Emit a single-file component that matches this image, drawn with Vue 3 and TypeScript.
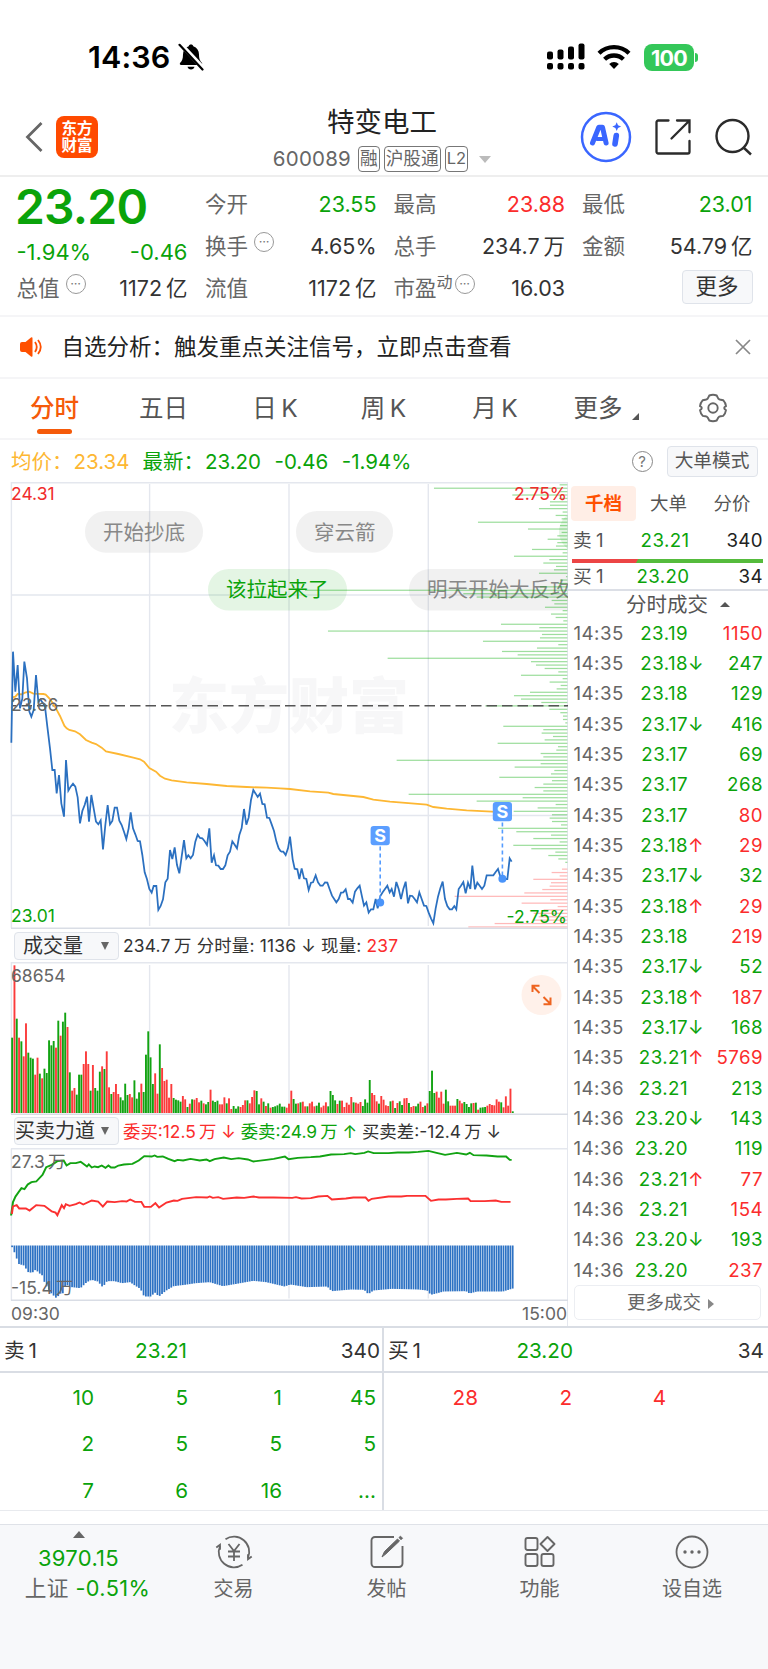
<script setup lang="ts">
type Tone = 'up' | 'down' | 'plain'
interface Quote { label: string; value: string; tone: Tone; info?: boolean; sup?: string }
interface Trade { time: string; price: string; dir: '' | 'u' | 'd'; vol: string; tone: Tone }
interface Bar { x: number; y: number; h: number; tone: Tone }

const quotes: Quote[] = [
  { label: '今开', value: '23.55', tone: 'down' },
  { label: '最高', value: '23.88', tone: 'up' },
  { label: '最低', value: '23.01', tone: 'down' },
  { label: '换手', value: '4.65%', tone: 'plain', info: true },
  { label: '总手', value: '234.7\u2009万', tone: 'plain' },
  { label: '金额', value: '54.79\u2009亿', tone: 'plain' },
  { label: '流值', value: '1172\u2009亿', tone: 'plain' },
  { label: '市盈', value: '16.03', tone: 'plain', info: true, sup: '动' },
]

const tabs = ['分时', '五日', '日\u2009K', '周\u2009K', '月\u2009K', '更多']

const trades: Trade[] = `14:35 23.19 - 1150 r|14:35 23.18 d 247 g|14:35 23.18 - 129 g|14:35 23.17 d 416 g|14:35 23.17 - 69 g|14:35 23.17 - 268 g|14:35 23.17 - 80 r|14:35 23.18 u 29 r|14:35 23.17 d 32 g|14:35 23.18 u 29 r|14:35 23.18 - 219 r|14:35 23.17 d 52 g|14:35 23.18 u 187 r|14:35 23.17 d 168 g|14:35 23.21 u 5769 r|14:36 23.21 - 213 g|14:36 23.20 d 143 g|14:36 23.20 - 119 g|14:36 23.21 u 77 r|14:36 23.21 - 154 r|14:36 23.20 d 193 g|14:36 23.20 - 237 r`
  .split('|')
  .map((row) => {
    const [time, price, dir, vol, tone] = row.split(' ')
    return { time, price, dir: dir === '-' ? '' : (dir as 'u' | 'd'), vol, tone: tone === 'r' ? 'up' : 'down' }
  })

const sellQueue = ['10', '5', '1', '45', '2', '5', '5', '5', '7', '6', '16', '...']
const buyQueue = ['28', '2', '4']

const gridX = [149.6, 289, 428.3]

const priceAm = '34,308 39,35 46,155 53,75 60,205 67,175 73,65 81,115 88,215 94,230 101,210 108,105 115,185 121,178 128,188 135,200 142,260 150,325 157,390 164,390 170,460 177,405 184,490 192,530 198,360 205,452 212,440 219,431 226,440 233,472 240,550 247,513 254,495 261,470 267,545 274,465 281,505 288,545 295,553 302,541 309,628 316,555 323,495 330,553 337,543 344,503 351,503 358,542 365,555 372,575 379,597 386,565 392,517 399,565 406,583 413,603 420,604 427,645 434,697 441,718 448,747 455,758 461,738 469,738 475,810 482,798 489,778 496,727 503,716 510,630 517,657 524,622 531,675 538,700 545,650 552,600 559,655 565,646 572,655 579,645 586,605 593,584 600,594 607,595 614,604 621,615 628,565 635,668 642,646 648,676 655,677 662,687 669,687 676,676 683,646 690,635 697,604 704,614 711,625 718,585 725,564 732,507 739,554 746,533 753,480 760,450 767,461 773,471 780,461 787,492 794,493 801,533 808,534 815,553 822,573 829,604 836,625 843,635'
const pricePm = '3,455 10,455 17,465 24,445 30,410 38,478 44,506 52,508 58,537 65,505 72,535 79,537 86,570 93,548 99,547 107,526 114,547 121,557 128,557 135,547 142,548 149,568 156,587 163,598 169,607 176,597 183,578 190,577 197,568 204,597 210,597 218,608 225,575 232,565 239,557 246,590 252,617 259,607 266,638 273,628 280,628 287,597 293,625 301,588 308,577 315,567 322,557 329,577 335,567 342,590 349,546 356,567 363,597 370,567 377,545 384,610 390,587 397,588 404,597 411,607 418,577 425,597 432,617 439,618 446,638 453,655 460,670 467,625 474,590 481,565 488,545 495,597 502,618 509,628 516,628 523,618 529,628 536,567 543,557 550,546 557,580 564,548 571,567 577,497 585,568 592,548 599,557 606,567 613,557 620,526 640,526 647,516 654,507 661,530 667,537 682,537 689,475 695,485'
const avgAm = '35,205 38,172 46,170 53,162 65,163 75,158 88,155 100,161 130,162 137,164 150,177 165,200 180,228 193,257 200,265 208,270 225,274 240,283 258,300 275,308 288,312 305,323 318,334 355,342 400,353 420,358 432,365 448,384 468,395 480,407 495,416 515,421 560,427 620,432 680,438 740,441 800,443 840,445'
const avgPm = '0,265 30,267 90,274 145,278 160,282 250,291 280,299 330,305 440,314 460,321 500,326 560,331 636,335 665,337'

// Resting orders per price level, top to bottom; the last 18 are bids.
const depth = '23 400 25 165 25 52 52 85 14 35 17 268 22 118 17 30 59 30 34 106 14 160 54 72 34 40 85 4 22 27 82 787 312 272 47 39 67 14 49 35 12 199 84 718 76 82 253 27 91 196 149 539 109 94 68 27 139 14 53 20 32 112 160 139 78 246 54 21 13 13 6 192 72 77 43 68 209 28 33 80 72 512 80 158 39 49 204 46 72 98 72 476 134 272 35 89 161 46 53 46 19 208 153 49 102 23 162 108 36 57 27 6 0 16 47 23 102 49 53 75 129 338 51 137 29 71 101 86 101 218 297'
  .split(' ')
  .map(Number)
const asks = depth.length - 18
const depthBars = depth.map((n, i) => ({ w: n / 3, x: 567.3 - n / 3, y: 484.2 + i * 3.401, ask: i < asks }))

const STEP = 2.307
const volumeBars: Bar[] = 'g352 r135 g295 r352 g363 r408 r309 g397 g412 g415 r463 r412 g460 r474 g445 g458 g360 g375 g362 r382 g301 r346 g304 g277 r320 g456 r511 r503 g523 g463 g463 r431 r393 r431 g511 r434 g503 g511 g454 r438 g446 r393 r501 g521 r515 r491 r521 g531 g540 g490 g524 r521 r531 g480 g535 g516 r490 g515 g403 g333 g411 g491 r459 r520 g372 r443 r482 r478 r532 r491 g533 g538 g540 g544 r527 r537 g560 r550 g537 r538 r533 r546 g541 r549 g552 g545 r508 g541 g545 g541 r552 r552 r531 g549 r534 r566 g557 g565 g558 r560 r554 r540 g540 r549 r530 r510 g512 g552 r534 g544 r557 g549 r562 g560 g558 g555 g550 g559 g559 r562 r550 r511 g536 g550 r549 g546 r544 r558 g558 r549 r544 r558 g556 g547 r561 r556 r546 g558 g512 g524 g540 r551 g541 r541 r560 r547 r553 r530 g546 r547 r550 r545 g557 g537 g547 g479 r518 r524 r543 g550 r527 r538 r555 r557 g543 r541 g563 r548 g543 g554 r534 r533 g548 r560 r557 g558 g550 r544 r560 g556 r549 g512 g451 g518 r514 r532 r514 r550 g508 g543 r556 r556 r556 g536 r541 r549 g545 g551 g560 g549 r548 g547 r568 g562 g561 g560 r556 r551 r554 r555 r537 r544 g546 r561 r528 r556 r505 g573'
  .split(' ')
  .map((t, i) => {
    const h = (578 - Number(t.slice(1))) / 3
    return { x: 11.2 + i * STEP, y: 1113 - h, h, tone: t[0] === 'r' ? 'up' : 'down' }
  })

const sellForce = '30,315 35,275 42,258 50,245 58,233 66,236 75,222 85,215 98,213 115,193 125,170 140,163 155,152 172,150 180,165 190,158 205,158 218,154 235,168 240,162 248,171 256,168 265,170 275,165 285,172 293,165 300,171 310,171 320,165 335,162 358,160 375,150 390,137 410,138 418,135 425,139 440,138 455,145 472,152 480,148 495,150 515,145 540,150 558,147 567,152 580,146 605,141 625,146 645,143 670,147 685,153 720,148 740,145 770,138 780,146 805,142 840,140 865,138 895,132 930,131 948,128 960,131 985,127 995,123 1010,128 1050,128 1075,126 1105,126 1130,124 1158,121 1180,127 1203,133 1235,127 1260,132 1270,127 1280,134 1315,135 1345,138 1368,138 1378,148 1383,148'
const buyForce = '32,310 35,288 45,284 52,294 70,294 80,300 98,284 120,286 140,303 150,306 155,314 167,284 173,293 178,281 188,286 205,281 215,276 225,282 248,270 265,273 278,288 290,273 310,275 330,272 342,273 352,267 365,274 382,274 390,289 408,289 420,278 430,291 450,276 470,270 480,271 492,265 530,260 560,261 567,258 575,262 590,260 603,265 640,261 660,262 685,258 700,261 740,261 790,262 800,260 815,264 840,263 860,258 885,256 897,267 935,264 955,261 988,261 996,271 1005,265 1050,258 1085,258 1100,256 1150,256 1165,271 1185,267 1205,267 1235,265 1265,264 1272,272 1310,272 1340,270 1355,274 1380,274'
const gap = '33,410 42,432 50,460 65,465 78,487 90,485 97,477 105,487 115,495 122,520 140,550 155,565 160,550 172,548 178,522 195,530 218,533 235,515 248,508 265,513 278,530 290,512 310,512 330,518 352,515 365,525 380,535 390,558 410,558 418,545 430,558 450,540 470,527 500,523 530,518 567,515 603,527 640,520 685,511 720,515 770,528 785,522 830,530 885,528 897,542 950,537 985,538 996,551 1010,540 1060,535 1130,537 1155,540 1165,553 1200,543 1260,542 1270,549 1290,543 1360,543 1390,533'
  .split(' ')
  .map((p) => p.split(',').map(Number))

function gapAt(x: number): number {
  const k = Math.max(1, gap.findIndex((p) => p[0] >= x))
  const [x0, y0] = gap[k - 1]
  const [x1, y1] = gap[k]
  return y0 + ((y1 - y0) * (x - x0)) / (x1 - x0)
}
const gapBars = Array.from({ length: 218 }, (_, i) => ({
  x: 11.2 + i * STEP,
  h: (gapAt(33 + i * 6.237) - 405) / 3,
}))
</script>

<template>
  <div class="page">
    <header class="status">
      <div class="clock">
        <span class="time">14:36</span>
        <svg width="26" height="28" viewBox="0 0 26 28">
          <path d="M13 1.500c1.300 0 2 .7 2.300 1.700C19 4.500 21 7.500 21 11.500c0 4.500 1.300 6.500 2.800 8.300.8.900.4 2.200-1 2.200H3.200c-1.400 0-1.800-1.300-1-2.200 1.700-1.800 2.800-3.800 2.800-8.300 0-4 2-7 5.700-8.300.3-1 1-1.700 2.300-1.700z" />
          <path d="M9.500 23.800h7c-.4 1.800-1.800 2.700-3.500 2.700s-3.100-.9-3.500-2.700z" />
          <path d="M3 1.500 25.500 25.500" stroke="#fff" stroke-width="4.500" />
          <path d="M1.500 1.800 24.500 26.500" stroke="#000" stroke-width="2.200" stroke-linecap="round" />
        </svg>
      </div>
      <div class="sys">
        <svg width="39" height="28" viewBox="0 0 39 28">
          <g>
            <rect x="1" y="8.500" width="6" height="8" rx="2" /><rect x="11.500" y="6.500" width="6" height="10" rx="2" />
            <rect x="22" y="3.500" width="6" height="13" rx="2" /><rect x="32.500" y=".5" width="6" height="16" rx="2" />
            <rect x="1" y="20" width="6" height="6.500" rx="2" /><rect x="11.500" y="20" width="6" height="6.500" rx="2" />
            <rect x="22" y="20" width="6" height="6.500" rx="2" /><rect x="32.500" y="20" width="6" height="6.500" rx="2" />
          </g>
        </svg>
        <svg class="wifi" width="34" height="26" viewBox="0 0 34 26" fill="none" stroke="#000" stroke-width="4.300">
          <path d="M2 9.300a21.500 21.500 0 0 1 30 0" /><path d="M7.600 15.300a13.500 13.500 0 0 1 18.800 0" />
          <path d="M17 25l-4.800-4.900a6.800 6.800 0 0 1 9.600 0z" fill="#000" stroke="none" />
        </svg>
        <span class="battery">100</span><i class="nub"></i>
      </div>
    </header>

    <nav class="top">
      <div class="left">
        <svg width="18" height="30" viewBox="0 0 18 30" fill="none" stroke="#666" stroke-width="2.800"><path d="M16.500 1 2.500 15l14 14" /></svg>
        <div class="logo"><span>东方</span><span>财富</span></div>
      </div>
      <div class="title">
        <h1>特变电工</h1>
        <div class="code"><span>600089</span><b>融</b><b>沪股通</b><b>L2</b><i></i></div>
      </div>
      <div class="actions">
        <svg width="52" height="52" viewBox="0 0 52 52">
          <circle cx="26" cy="26" r="24" fill="#fff" stroke="#3a66ff" stroke-width="2.500" />
          <g fill="none" stroke="#3a66ff" stroke-linecap="round" stroke-linejoin="round">
            <path d="M12.500 32 18.800 16.200h3.700l3.600 15.800" stroke-width="5" /><path d="M17 28h7" stroke-width="4" />
            <path d="M36.300 24.500 35 33" stroke-width="5.600" />
          </g>
          <path d="M36.700 11.200l1.300 3.100 3.100 1.300-3.100 1.300-1.300 3.100-1.300-3.100-3.100-1.300 3.100-1.300z" fill="#3a66ff" />
        </svg>
        <svg width="36" height="36" viewBox="0 0 36 36" fill="none" stroke="#2b2b2b" stroke-width="2.300" stroke-linecap="round">
          <path d="M13.500 1.500H3.200a1.700 1.700 0 0 0-1.700 1.700v29.600a1.700 1.700 0 0 0 1.700 1.700h29.600a1.700 1.700 0 0 0 1.700-1.700V22" /><path d="M22 1.500h12.500v11.800M34 2 16.500 19.500" />
        </svg>
        <svg width="38" height="38" viewBox="0 0 38 38" fill="none" stroke="#2b2b2b" stroke-width="2.400"><circle cx="17.500" cy="18" r="16" /><path d="M28.500 29.500 36 36.500" /></svg>
      </div>
    </nav>

    <section class="quote">
      <div class="last">
        <div class="big">23.20</div>
        <div class="pair green"><span>-1.94%</span><span>-0.46</span></div>
        <div class="pair cap"><span class="lbl">总值<i class="dots">···</i></span><span>1172&#8201;亿</span></div>
      </div>
      <div class="cells">
        <div v-for="q in quotes" :key="q.label" class="cell">
          <span class="lbl">{{ q.label }}<sup v-if="q.sup">{{ q.sup }}</sup><i v-if="q.info" class="dots" :class="{ tight: q.sup }">···</i></span>
          <span :class="q.tone">{{ q.value }}</span>
        </div>
        <div class="cell end"><button class="more">更多</button></div>
      </div>
    </section>

    <section class="notice">
      <svg width="24" height="22" viewBox="0 0 24 22">
        <path d="M1 8q0-2 2-2h3.500L12 1.500q1.500-1 1.500.8v17.400q0 1.800-1.500.8L6.500 16H3q-2 0-2-2z" fill="#ff5000" />
        <path d="M16 6q3.500 5 0 10M19 4q5.500 7 0 14" fill="none" stroke="#ff5000" stroke-width="1.800" />
      </svg>
      <p>自选分析：触发重点关注信号，立即点击查看</p>
      <svg width="16" height="16" viewBox="0 0 16 16" stroke="#888" stroke-width="1.700"><path d="M1 1l14 14M15 1 1 15" /></svg>
    </section>

    <section class="tabs">
      <div v-for="(t, i) in tabs" :key="t" class="tab" :class="{ on: i === 0 }"><span>{{ t }}</span><i v-if="i === 5" class="corner"></i></div>
      <div class="tab">
        <svg width="30" height="30" viewBox="0 0 30 30" fill="none" stroke="#666" stroke-width="1.900" stroke-linejoin="round">
          <path d="M11.300 2.500Q15 1 18.700 2.500L20.300 5.600Q21.200 6.800 22.800 6.700L25.200 7.200Q27.700 10 28 13.200L26.600 14Q26 15 26.600 16L28 17.200Q27.500 20.500 25.200 22.900L22.800 23.300Q21.200 23.200 20.300 24.500L18.700 27.500Q15 29 11.300 27.500L9.700 24.500Q8.800 23.200 7.200 23.300L4.800 22.900Q2.500 20.500 2 17.200L3.400 16Q4 15 3.400 14L2 13.200Q2.300 10 4.800 7.200L7.200 6.700Q8.800 6.800 9.700 5.600Z" />
          <circle cx="15" cy="15" r="4.700" />
        </svg>
      </div>
    </section>

    <section class="info">
      <p><span class="gold">均价：</span><span class="gold v1">23.34</span><span class="n">最新：</span><span class="v2">23.20</span><span class="v3">-0.46</span><span>-1.94%</span></p>
      <span class="help">?</span>
      <button>大单模式</button>
    </section>

    <main class="body">
      <div class="charts">
        <svg class="plot price" width="568" height="447" viewBox="0 482 568 447">
          <text class="mark" x="169" y="728">东方财富</text>
          <g stroke="#e4e7ee" stroke-width="1.400">
            <path d="M11 482.700H568M11 595h557M11 815.500h557" /><path d="M11.400 482v446" />
            <path v-for="x in gridX" :key="x" :d="`M${x} 484V926`" />
          </g>
          <g class="bubble">
            <rect x="85" y="511" width="118" height="41.700" rx="20.800" /><rect x="296" y="511" width="97" height="41.700" rx="20.800" />
            <rect x="409" y="569" width="220" height="41.500" rx="20.800" />
            <rect class="g" x="208" y="569" width="139" height="41.500" rx="20.800" /><rect class="g" x="559" y="511" width="90" height="41.700" rx="20.800" />
          </g>
          <g class="bubble-text">
            <text x="103" y="539.500">开始抄底</text><text x="314" y="539.500">穿云箭</text><text x="427" y="597">明天开始大反攻</text>
            <text x="226" y="597" class="g">该拉起来了</text>
          </g>
          <g><rect v-for="(b, i) in depthBars" :key="i" :x="b.x" :y="b.y" :width="b.w" height="1.250" :fill="b.ask ? '#00a800' : '#ff3333'" :fill-opacity="b.ask ? 0.38 : 0.34" /></g>
          <path d="M12 705.700H568" stroke="#555" stroke-width="1.600" stroke-dasharray="10.500 5" stroke-dashoffset="6" />
          <g transform="translate(0 640) scale(.33333)" fill="none">
            <polyline :points="avgAm" stroke="#fdb733" stroke-width="5.500" /><polyline :points="priceAm" stroke="#2b70c0" stroke-width="5.300" />
          </g>
          <g transform="translate(280 700) scale(.33333)" fill="none">
            <polyline :points="avgPm" stroke="#fdb733" stroke-width="5.500" /><polyline :points="pricePm" stroke="#2b70c0" stroke-width="5.300" />
          </g>
          <g v-for="m in [{ x: 380.2, y: 826, d: 902.5 }, { x: 502.4, y: 802, d: 878.8 }]" :key="m.x">
            <path :d="`M${m.x} ${m.y + 20.500}V${m.d}`" stroke="#559cff" stroke-width="1.600" stroke-dasharray="4 3" />
            <circle :cx="m.x" :cy="m.d" r="4" fill="#4a94fa" />
            <rect :x="m.x - 9.600" :y="m.y" width="19.200" height="19.300" rx="3" fill="#5b9eff" />
            <text class="s" :x="m.x" :y="m.y + 16">S</text>
          </g>
          <g class="tick">
            <text x="11" y="500.300" class="hi">24.31</text><text x="567" y="500.300" class="hi" text-anchor="end">2.75%</text>
            <text x="11" y="710.500">23.66</text><text x="11" y="922" class="lo">23.01</text><text x="567" y="922.500" class="lo" text-anchor="end">-2.75%</text>
          </g>
          <path d="M11 928.300h557" stroke="#d9dde5" stroke-width="1.400" />
        </svg>

        <div class="ctl first">
          <button><span>成交量</span><i></i></button>
          <p class="vol">234.7&#8201;万 分时量: 1136 ↓ 现量: <em class="up">237</em></p>
        </div>
        <svg class="plot" width="568" height="153" viewBox="0 962 568 153">
          <g stroke="#e4e7ee" stroke-width="1.400"><path d="M11 962.700H568M11.400 962v152" /><path v-for="x in gridX" :key="x" :d="`M${x} 965V1113`" /></g>
          <rect v-for="(b, i) in volumeBars" :key="i" :x="b.x" :y="b.y" width="1.900" :height="b.h" :fill="b.tone === 'up' ? '#fb3b3b' : '#12a312'" />
          <path d="M11 1114.200h557" stroke="#d9dde5" stroke-width="1.400" />
          <g class="tick"><text x="11" y="981.500">68654</text></g>
          <circle cx="541.500" cy="995" r="20" fill="#fff1ea" />
          <path d="M539.500 993l-7-7M532.500 992v-6.300h7M543.500 997l7 7M550.500 997.500v6.700h-7" fill="none" stroke="#ee6420" stroke-width="2" />
        </svg>

        <div class="ctl">
          <button class="wide"><span>买卖力道</span><i></i></button>
          <p class="force"><em class="up">委买:12.5&#8201;万 ↓</em> <em class="down">委卖:24.9&#8201;万 ↑</em> 买卖差:-12.4&#8201;万 ↓</p>
        </div>
        <svg class="plot" width="568" height="153" viewBox="0 1147.500 568 153">
          <g stroke="#e4e7ee" stroke-width="1.400"><path d="M11 1148.300H568M11.400 1148v152" /><path v-for="x in gridX" :key="x" :d="`M${x} 1151V1298`" /></g>
          <rect v-for="(b, i) in gapBars" :key="i" :x="b.x" y="1245" width="1.750" :height="b.h" fill="#2d72c4" />
          <g transform="translate(0 1110) scale(.36996 .33333)" fill="none" stroke-width="5.500">
            <polyline :points="sellForce" stroke="#12a312" /><polyline :points="buyForce" stroke="#fb3030" />
          </g>
          <path d="M11 1299.700h557" stroke="#d9dde5" stroke-width="1.400" />
          <g class="tick"><text x="11" y="1167">27.3&#8201;万</text><text x="11" y="1293">-15.4&#8201;万</text></g>
        </svg>
        <div class="axis"><span>09:30</span><span>15:00</span></div>
      </div>

      <aside class="side">
        <div class="seg"><b>千档</b><span>大单</span><span>分价</span></div>
        <div class="lv"><span>卖&#8201;1</span><span class="p">23.21</span><span class="q">340</span></div>
        <div class="ratio"></div>
        <div class="lv buy"><span>买&#8201;1</span><span class="p">23.20</span><span class="q">34</span></div>
        <div class="sub">分时成交<i></i></div>
        <div v-for="(t, i) in trades" :key="i" class="trade">
          <span class="t">{{ t.time }}</span><span class="p">{{ t.price }}</span>
          <span class="a" :class="t.dir === 'u' ? 'up' : 'down'">{{ t.dir === 'u' ? '↑' : t.dir === 'd' ? '↓' : '' }}</span>
          <span class="q" :class="t.tone">{{ t.vol }}</span>
        </div>
        <button class="all">更多成交<i></i></button>
      </aside>
    </main>

    <section class="queues">
      <div class="queue">
        <div class="head"><span>卖&#8201;1</span><span class="p">23.21</span><span class="q">340</span></div>
        <div class="nums down"><span v-for="(n, i) in sellQueue" :key="i">{{ n }}</span></div>
      </div>
      <div class="queue">
        <div class="head"><span>买&#8201;1</span><span class="p">23.20</span><span class="q">34</span></div>
        <div class="nums up"><span v-for="(n, i) in buyQueue" :key="i">{{ n }}</span></div>
      </div>
    </section>

    <footer class="dock">
      <div class="index"><i></i><strong>3970.15</strong><span>上证 <em>-0.51%</em></span></div>
      <div class="item">
        <svg width="38" height="34" viewBox="0 0 38 34" fill="none" stroke="#666" stroke-width="1.800">
          <path d="M10.500 4.200A15.300 15.300 0 0 1 33 23M27.500 29.800A15.300 15.300 0 0 1 5 11" />
          <path d="M1.300 12.500 5 9.700v5M36.700 21.500 33 24.300v-5" /><path d="M13.500 9l5.500 7 5.500-7M13 16.500h12M13 21.500h12M19 16v10" />
        </svg>
        <span>交易</span>
      </div>
      <div class="item">
        <svg width="34" height="34" viewBox="0 0 34 34" fill="none" stroke="#666" stroke-width="1.900">
          <path d="M24 2H5a3.500 3.500 0 0 0-3.500 3.500v23A3.500 3.500 0 0 0 5 32h24a3.500 3.500 0 0 0 3.500-3.500V11" />
          <path d="M12 22l2.500-5.500L27.500 4l2 2L16 18.800zM29 2.500l1.500-1.300 2 2L31 4.700z" fill="#666" stroke="#666" stroke-width="1" />
        </svg>
        <span>发帖</span>
      </div>
      <div class="item">
        <svg width="32" height="32" viewBox="0 0 32 32" fill="none" stroke="#666" stroke-width="1.900">
          <rect x="1.500" y="2" width="12" height="12" rx="2" /><path d="M23.500 1 30.500 8l-7 7-7-7z" stroke-linejoin="round" />
          <rect x="1.500" y="18" width="12" height="12" rx="2" /><rect x="17.500" y="18" width="12" height="12" rx="2" />
        </svg>
        <span>功能</span>
      </div>
      <div class="item">
        <svg width="34" height="34" viewBox="0 0 34 34"><circle cx="17" cy="17" r="15.500" fill="none" stroke="#666" stroke-width="1.800" /><g fill="#666"><circle cx="10" cy="17" r="1.700" /><circle cx="17" cy="17" r="1.700" /><circle cx="24" cy="17" r="1.700" /></g></svg>
        <span>设自选</span>
      </div>
    </footer>
  </div>
</template>

<style>
body { margin: 0; background: #fff; }
</style>

<style scoped>
.page { width: 768px; height: 1669px; overflow: hidden; display: flex; flex-direction: column; background: #fff; color: #333; font-family: Inter, "Noto Sans CJK SC", sans-serif; font-size: 21px; line-height: 1; }
.page * { box-sizing: border-box; }
h1, p { margin: 0; font-weight: 400; }
i, em { font-style: normal; }
button { font: inherit; color: #333; background: #f7f8fa; border: 1.400px solid #dfe3ea; border-radius: 4px; padding: 0; }
.up { color: #fb2c2c; }
.down, .green { color: #0aa30a; }
.plain { color: #333; }

.status { height: 100px; padding: 14px 70px 0 88px; display: flex; justify-content: space-between; align-items: center; flex: none; }
.clock { display: flex; align-items: center; gap: 7.500px; color: #000; }
.time { font-size: 30.500px; font-weight: 600; letter-spacing: .1px; }
.sys { display: flex; align-items: center; }
.wifi { margin: 0 13px 0 12px; }
.battery { width: 50px; height: 27px; border-radius: 8px; background: #34c759; color: #fff; font-weight: 700; font-size: 21.500px; letter-spacing: -.7px; line-height: 27px; padding-top: 1px; text-align: center; }
.nub { width: 3px; height: 9px; margin-left: 1px; border-radius: 0 3px 3px 0; background: #34c759; }

.top { height: 77px; display: grid; grid-template-columns: 240px 284px 244px; border-bottom: 2px solid #eee; flex: none; }
.left { display: flex; align-items: center; padding: 0 0 2px 25px; gap: 13px; }
.logo { width: 42px; height: 42px; border-radius: 8px; background: #ff4a00; color: #fff; display: flex; flex-direction: column; align-items: center; justify-content: center; font-weight: 700; font-size: 15.500px; line-height: 17px; }
.title { display: flex; flex-direction: column; align-items: center; padding-top: 9px; }
h1 { font-size: 27.500px; line-height: 27px; color: #222; height: 37px; }
.code { display: flex; align-items: center; height: 26px; color: #666; }
.code span { font-size: 20.500px; margin-right: 7px; letter-spacing: .2px; }
.code b { height: 26px; border: 1.400px solid #777; border-radius: 4px; padding: 0 1px; margin-right: 4px; font-weight: 400; font-size: 17.700px; line-height: 23px; }
.code b:nth-child(4) { font-size: 16.500px; margin-right: 0; }
.code i { border: 6px solid transparent; border-top: 7px solid #bbb; border-bottom: 0; margin-left: 11px; }
.actions { display: flex; align-items: center; padding: 0 0 2px 55.500px; gap: 24px; }
.actions svg:first-child { margin-right: -1px; }

.quote { height: 140px; padding: 4px 15px 0 16.500px; display: grid; grid-template-columns: 171px 548px; gap: 17.500px; border-bottom: 2px solid #f5f5f7; flex: none; font-size: 21.500px; }
.big { height: 51px; margin-left: -1.500px; font-size: 48px; font-weight: 600; line-height: 52px; letter-spacing: -.8px; color: #0aa30a; }
.pair { display: flex; justify-content: space-between; height: 40px; line-height: 41px; }
.pair.green { font-size: 22px; }
.pair.cap { height: 32px; line-height: 32px; }
.cells { display: grid; grid-template-columns: 171.500px 171.500px 170.500px; column-gap: 17px; grid-auto-rows: 42px; padding-top: 2px; }
.cell { display: flex; justify-content: space-between; line-height: 42px; white-space: nowrap; }
.cell.end { grid-column: 3; align-items: center; justify-content: flex-end; }
.lbl { color: #666; display: flex; align-items: center; }
.lbl sup { font-size: 16px; line-height: 16px; align-self: flex-start; margin-top: 7px; }
.cells .lbl { height: 42px; }
.dots { width: 20px; height: 20px; border: 1.500px solid #999; border-radius: 50%; margin: -8px 0 0 6px; font-size: 13px; line-height: 16px; text-align: center; letter-spacing: -.3px; color: #777; }
.dots.tight { margin-left: 2px; }
.more { width: 71px; height: 34px; line-height: 31px; margin-bottom: 3px; }

.notice { height: 62px; padding: 0 17px 0 19px; display: flex; align-items: center; border-bottom: 2px solid #f5f5f7; flex: none; }
.notice p { flex: 1; margin-left: 18.500px; font-size: 22.500px; color: #222; padding-top: 1px; }

.tabs { height: 61px; display: grid; grid-template-columns: 109px 109px 114px 103px 120px 102px 111px; border-bottom: 2px solid #f5f5f7; flex: none; color: #555; }
.tab { display: flex; justify-content: center; align-items: center; font-size: 24.500px; position: relative; padding-bottom: 1px; }
.tab.on { color: #f55a0a; font-weight: 500; }
.tab.on::after { content: ""; position: absolute; bottom: 4px; width: 35px; height: 5px; border-radius: 3px; background: #f55a0a; }
.corner { align-self: flex-end; margin: 0 0 17px 9px; border-left: 7px solid transparent; border-bottom: 7px solid #555; }

.info { height: 42px; padding: 1px 10.500px 0 11px; display: flex; align-items: center; flex: none; }
.info p { flex: 1; font-size: 20.500px; color: #0aa30a; white-space: nowrap; padding-top: 1px; }
.info .gold { color: #fdb733; }
.info .v1 { margin: 0 13px 0 1px; }
.info .v2, .info .v3 { margin-right: 13.500px; }
.info .n { margin-right: 1px; }
.help { width: 21px; height: 21px; border: 1.500px solid #888; border-radius: 50%; color: #777; font-size: 15px; line-height: 19px; text-align: center; margin-right: 14px; }
.info button { width: 91px; height: 31px; font-size: 18.700px; color: #555; }

.body { height: 844px; display: grid; grid-template-columns: 568px 200px; flex: none; }
.charts { border-right: 1.400px solid #e4e7ee; display: flex; flex-direction: column; }
.plot { display: block; flex: none; }
.mark { font-size: 60px; font-weight: 900; fill: #f7f7f8; }
.bubble { fill: #777; fill-opacity: .1; }
.bubble .g { fill: #0aa30a; fill-opacity: .11; }
.bubble-text { font-size: 20.500px; fill: #888; }
.bubble-text .g { fill: #0aa30a; }
.tick { font-size: 17.500px; fill: #666; }
.tick .hi { fill: #f02c2c; }
.tick .lo { fill: #0aa30a; }
.s { font-size: 18px; font-weight: 700; fill: #fff; text-anchor: middle; }
.ctl { height: 32.500px; display: flex; align-items: center; padding-left: 14px; flex: none; }
.ctl.first { height: 33px; }
.ctl button { width: 105px; height: 28px; display: flex; align-items: center; padding-left: 8px; font-size: 20px; white-space: nowrap; }
.ctl button.wide { padding-left: 0; }
.ctl button i { margin-left: auto; margin-right: 9px; border: 4.500px solid transparent; border-top: 8px solid #666; border-bottom: 0; }
.ctl p { margin-left: 4px; font-size: 17.400px; white-space: nowrap; padding-top: 1px; }
.ctl .vol { letter-spacing: .2px; }
.axis { display: flex; justify-content: space-between; padding: 4px 0 0 11px; font-size: 17.500px; color: #666; }

.side { display: flex; flex-direction: column; }
.seg { height: 41px; padding: 4px 0 0 3px; display: flex; font-size: 18.500px; color: #555; }
.seg > * { width: 65px; height: 35px; line-height: 35px; text-align: center; }
.seg b { color: #ff5000; background: #ffeee6; border-radius: 4px; font-weight: 600; }
.seg span:last-child { width: 62px; }
.lv { height: 36px; padding: 1px 5px 0 5px; display: grid; grid-template-columns: 50px 66.500px 1fr; align-items: center; font-size: 18.700px; color: #555; letter-spacing: .4px; }
.lv .p, .trade .p { color: #0aa30a; text-align: right; }
.lv .q { color: #222; text-align: right; }
.ratio { height: 4px; margin: 0 5px 0 4px; background: linear-gradient(120deg, #ec4545 34%, #55bb3c 34.500%); flex: none; }
.lv.buy { height: 25.500px; padding-top: 3px; }
.sub { height: 29.500px; border-top: 2px solid #dcdfe6; display: flex; align-items: center; justify-content: center; font-size: 20.500px; color: #555; padding: 1px 0 0 20px; }
.sub i { margin: 0 0 0 12px; border: 5px solid transparent; border-bottom: 5px solid #555; border-top: 0; }
.trade { height: 30.330px; padding: 2px 5px 0 5.500px; display: grid; grid-template-columns: 50px 64.500px 15px 1fr; align-items: center; font-size: 18.700px; letter-spacing: .45px; flex: none; }
.trade .t { color: #666; }
.trade .q { text-align: right; }
.all { margin: 0 7px 0 6px; height: 35px; border-color: #eceef2; background: #fff; border-radius: 5px; font-size: 18.500px; line-height: 31px; color: #666; flex: none; padding-left: 6px; }
.all i { display: inline-block; margin-left: 7px; border: 5px solid transparent; border-left: 6px solid #888; border-right: 0; }

.queues { height: 185px; display: grid; grid-template-columns: 384px 384px; border-top: 2px solid #d9dde4; border-bottom: 1.500px solid #e8eaee; flex: none; font-size: 20.700px; overflow: hidden; }
.queue:first-child { border-right: 2px solid #d9dde4; }
.head { height: 45px; border-bottom: 2px solid #d9dde4; padding: 3px 2px 0 4px; display: grid; grid-template-columns: 110px 73px 1fr; align-items: center; color: #333; }
.queue + .queue .head { padding-right: 4px; grid-template-columns: 112px 73px 1fr; }
.head .p { color: #0aa30a; text-align: right; }
.head .q { text-align: right; }
.nums { display: grid; grid-template-columns: 94px 94px 94px 94px; grid-auto-rows: 46.500px; padding-top: 2px; align-items: center; text-align: right; }

.dock { margin-top: 13px; flex: 1; border-top: 1.500px solid #dfe2e8; background: #f7f8fa; display: grid; grid-template-columns: 157px 153px 153px 153px 152px; color: #666; }
.index { display: flex; flex-direction: column; align-items: center; padding-top: 6px; }
.index i { border: 6px solid transparent; border-bottom: 7px solid #666; border-top: 0; }
.index strong { font-weight: 400; color: #0aa30a; font-size: 22px; margin-top: 9px; letter-spacing: .3px; }
.index span { font-size: 21.700px; margin: 9px 0 0 18px; white-space: nowrap; letter-spacing: .4px; }
.index em { color: #0aa30a; }
.item { display: flex; flex-direction: column; align-items: center; padding-top: 10px; }
.item svg { height: 34px; }
.item span { font-size: 20px; margin-top: 10px; }
</style>
